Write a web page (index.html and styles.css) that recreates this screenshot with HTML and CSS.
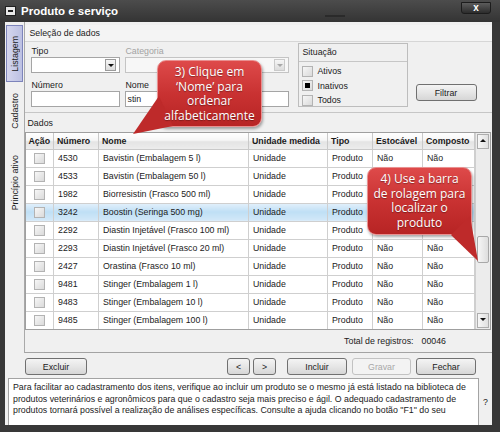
FILE: index.html
```html
<!DOCTYPE html>
<html lang="pt-BR">
<head>
    <meta charset="UTF-8">
    <meta name="viewport" content="width=device-width, initial-scale=1.0">
    <title>Produto e serviço</title>
    <link rel="stylesheet" href="styles.css">
</head>
<body>
    <div class="window">
        <div class="titlebar">
            <span class="sys-icon"></span>
            <span class="title">Produto e serviço</span>
            <span class="grip"></span>
            <span class="close">x</span>
        </div>

        <div class="frame">
            <div class="main">
                <div class="tabs">
                    <div class="tab active"><span>Listagem</span></div>
                    <div class="tab cadastro"><span>Cadastro</span></div>
                    <div class="tab principio"><span>Princípio ativo</span></div>
                </div>

                <div class="pane">
                    <!-- filtros -->
                    <div class="selection">
                        <div class="section-title">Seleção de dados</div>
                        <div class="filters">
                            <div class="fields">
                                <div class="field">
                                    <label>Tipo</label>
                                    <div class="combo"><span class="arrow"></span></div>
                                </div>
                                <div class="field disabled">
                                    <label>Categoria</label>
                                    <div class="combo"><span class="arrow"></span></div>
                                </div>
                                <div class="field second">
                                    <label>Número</label>
                                    <div class="input"></div>
                                </div>
                                <div class="field second">
                                    <label>Nome</label>
                                    <div class="input">stin</div>
                                </div>
                            </div>

                            <div class="situacao">
                                <div class="group-title">Situação</div>
                                <div class="checks">
                                    <div class="check"><span class="box"></span>Ativos</div>
                                    <div class="check"><span class="box checked"></span>Inativos</div>
                                    <div class="check"><span class="box"></span>Todos</div>
                                </div>
                            </div>

                            <button class="btn filtrar">Filtrar</button>
                        </div>
                    </div>

                    <!-- lista -->
                    <div class="data">
                        <div class="data-title">Dados</div>
                        <div class="grid">
                            <table>
                                <colgroup>
                                    <col class="c-acao">
                                    <col class="c-num">
                                    <col class="c-nome">
                                    <col class="c-un">
                                    <col class="c-tipo">
                                    <col class="c-est">
                                    <col class="c-comp">
                                </colgroup>
                                <thead>
                                    <tr>
                                        <th>Ação</th>
                                        <th>Número</th>
                                        <th>Nome</th>
                                        <th>Unidade medida</th>
                                        <th>Tipo</th>
                                        <th>Estocável</th>
                                        <th>Composto</th>
                                    </tr>
                                </thead>
                                <tbody>
                                    <tr><td class="acao"><span class="box"></span></td><td>4530</td><td>Bavistin (Embalagem 5 l)</td><td>Unidade</td><td>Produto</td><td>Não</td><td>Não</td></tr>
                                    <!-- linhas cobertas pelo balão 4 -->
                                    <tr><td class="acao"><span class="box"></span></td><td>4533</td><td>Bavistin (Embalagem 50 l)</td><td>Unidade</td><td>Produto</td><td></td><td></td></tr>
                                    <tr><td class="acao"><span class="box"></span></td><td>1982</td><td>Biorresistin (Frasco 500 ml)</td><td>Unidade</td><td>Produto</td><td></td><td></td></tr>
                                    <tr class="selected"><td class="acao"><span class="box"></span></td><td>3242</td><td>Boostin (Seringa 500 mg)</td><td>Unidade</td><td>Produto</td><td></td><td></td></tr>
                                    <tr><td class="acao"><span class="box"></span></td><td>2292</td><td>Diastin Injetável (Frasco 100 ml)</td><td>Unidade</td><td>Produto</td><td></td><td></td></tr>
                                    <tr><td class="acao"><span class="box"></span></td><td>2293</td><td>Diastin Injetável (Frasco 20 ml)</td><td>Unidade</td><td>Produto</td><td>Não</td><td>Não</td></tr>
                                    <tr><td class="acao"><span class="box"></span></td><td>2427</td><td>Orastina (Frasco 10 ml)</td><td>Unidade</td><td>Produto</td><td>Não</td><td>Não</td></tr>
                                    <tr><td class="acao"><span class="box"></span></td><td>9481</td><td>Stinger (Embalagem 1 l)</td><td>Unidade</td><td>Produto</td><td>Não</td><td>Não</td></tr>
                                    <tr><td class="acao"><span class="box"></span></td><td>9483</td><td>Stinger (Embalagem 10 l)</td><td>Unidade</td><td>Produto</td><td>Não</td><td>Não</td></tr>
                                    <tr><td class="acao"><span class="box"></span></td><td>9485</td><td>Stinger (Embalagem 100 l)</td><td>Unidade</td><td>Produto</td><td>Não</td><td>Não</td></tr>
                                </tbody>
                            </table>
                            <div class="scrollbar">
                                <span class="sb-btn up"></span>
                                <div class="track"><span class="thumb"></span></div>
                                <span class="sb-btn down"></span>
                            </div>
                        </div>
                        <div class="total">
                            <span>Total de registros:</span>
                            <span>00046</span>
                        </div>
                    </div>
                </div>
            </div>

            <div class="actions">
                <button class="btn excluir">Excluir</button>
                <button class="btn nav prev">&lt;</button>
                <button class="btn nav next">&gt;</button>
                <button class="btn incluir">Incluir</button>
                <button class="btn gravar" disabled>Gravar</button>
                <button class="btn fechar">Fechar</button>
            </div>

            <div class="help">
                <div class="help-text">Para facilitar ao cadastramento dos itens, verifique ao incluir um produto se o mesmo já está listado na biblioteca de produtos veterinários e agronômicos para que o cadastro seja mais preciso e ágil. O adequado cadastramento de produtos tornará possível a realização de análises específicas. Consulte a ajuda clicando no botão "F1" do seu</div>
                <div class="help-q">?</div>
            </div>
        </div>

        <!-- balões de dica -->
        <div class="callout tip-nome">3) Clique em<br>‘Nome’ para<br>ordenar<br>alfabeticamente</div>
        <div class="callout tip-scroll">4) Use a barra<br>de rolagem para<br>localizar o<br>produto</div>
    </div>
</body>
</html>
```

FILE: styles.css
```css
* {
    box-sizing: border-box;
}
body {
    margin: 0;
    font-family: "Liberation Sans", Arial, sans-serif;
    font-size: 8.8px;
    color: #1b1b1b;
}
button {
    font-family: inherit;
    font-size: inherit;
}

.window {
    position: relative;
    width: 500px;
    height: 432px;
    background: #383838;
    display: flex;
    flex-direction: column;
    overflow: hidden;
}

/* barra de título */
.titlebar {
    height: 22px;
    display: flex;
    align-items: center;
    padding: 0 9px 0 5px;
    background: linear-gradient(#4c4c4c, #343434);
}
.sys-icon {
    width: 11px;
    height: 10px;
    background: #e8e8e8;
    border: 1px solid #202020;
    position: relative;
}
.sys-icon::after {
    content: "";
    position: absolute;
    left: 2px;
    right: 2px;
    top: 3px;
    height: 2px;
    background: #202020;
}
.title {
    margin-left: 5px;
    color: #fff;
    font-weight: bold;
    font-size: 11.5px;
}
.grip {
    width: 20px;
    height: 2px;
    margin: 15px 0 0 207px;
    background: #2a2a2a;
    align-self: flex-start;
}
.close {
    margin-left: auto;
    align-self: flex-start;
    margin-top: 2px;
    width: 30px;
    height: 12px;
    background: linear-gradient(#5c5c5c, #2c2c2c);
    border: 1px solid #1c1c1c;
    border-radius: 0 0 3px 3px;
    color: #fff;
    font-weight: bold;
    font-size: 10px;
    line-height: 9px;
    text-align: center;
}

.frame {
    flex: 1;
    margin: 0 8px 7px 5px;
    background: #f0f0f0;
    display: flex;
    flex-direction: column;
}
.main {
    height: 331px;
    display: flex;
}

/* abas verticais */
.tabs {
    width: 20px;
    padding: 3px 0 0 1px;
    border-right: 1px solid #a9a9a9;
}
.tab {
    width: 17px;
    display: flex;
    align-items: center;
    justify-content: center;
    color: #1b1b1b;
}
.tab span {
    writing-mode: vertical-rl;
    transform: rotate(180deg);
    white-space: nowrap;
}
.tab.active {
    height: 57px;
    background: linear-gradient(90deg, #d4d6ee, #bcc0e2);
    border: 1px solid #7d84bb;
}
.tab.cadastro {
    height: 58px;
}
.tab.principio {
    height: 86px;
}

.pane {
    flex: 1;
    display: flex;
    flex-direction: column;
    padding-top: 3px;
}

/* seleção de dados */
.selection {
    height: 88px;
    border-bottom: 1px solid #c6c6c6;
}
.section-title {
    height: 17px;
    line-height: 17px;
    padding-left: 5px;
    border-bottom: 1px solid #d6d6d6;
    background: #f4f4f4;
}
.filters {
    display: flex;
    padding: 3px 6px 0;
}
.fields {
    display: grid;
    grid-template-columns: 89px 164px;
    column-gap: 5px;
}
.field label {
    display: block;
    height: 12px;
    line-height: 12px;
    padding-left: 1px;
}
.field.second label {
    margin-top: 6px;
}
.field.disabled label {
    color: #a3a3a3;
}
.combo, .input {
    height: 16px;
    background: #fff;
    border: 1px solid #a5a5a5;
}
.combo {
    display: flex;
    justify-content: flex-end;
    align-items: center;
    padding-right: 3px;
}
.input {
    line-height: 14px;
    padding-left: 2px;
}
.arrow {
    width: 11px;
    height: 12px;
    border: 1px solid #9a9a9a;
    background: linear-gradient(#f6f6f6, #dcdcdc);
    position: relative;
}
.arrow::after {
    content: "";
    position: absolute;
    left: 2px;
    top: 4px;
    border: 3px solid transparent;
    border-top: 3px solid #111;
    border-bottom: 0;
}
.field.disabled .combo {
    background: #f7f7f7;
    border-color: #c4c4c4;
}
.field.disabled .arrow {
    border-color: #cacaca;
}
.field.disabled .arrow::after {
    border-top-color: #a8a8a8;
}

.situacao {
    width: 110px;
    height: 64px;
    margin: -2px 0 0 9px;
    border: 1px solid #bdbdbd;
}
.group-title {
    height: 18px;
    line-height: 17px;
    padding-left: 4px;
    border-bottom: 1px solid #c6c6c6;
}
.checks {
    padding: 2px 0 0 3px;
}
.check {
    height: 14.5px;
    display: flex;
    align-items: center;
    gap: 5px;
}
.box {
    display: inline-block;
    width: 11px;
    height: 11px;
    border: 1px solid #b3b3b3;
    background: linear-gradient(135deg, #f7f7f7, #dadada);
    position: relative;
}
.box.checked::after {
    content: "";
    position: absolute;
    left: 2px;
    top: 2px;
    width: 5px;
    height: 5px;
    background: #000;
}

.btn {
    height: 17px;
    padding: 0;
    border: 1px solid #707070;
    border-radius: 3px;
    background: linear-gradient(#f4f4f4, #e6e6e6 50%, #d6d6d6);
    color: #1b1b1b;
}
.btn:disabled {
    border-color: #c2c2c2;
    background: #f3f3f3;
    color: #a8a8a8;
}
.filtrar {
    width: 61px;
    margin: 0 0 6px 8px;
    align-self: flex-end;
}

/* dados */
.data {
    flex: 1;
    display: flex;
    flex-direction: column;
    border-bottom: 1px solid #a3a3a3;
}
.data-title {
    height: 19px;
    line-height: 20px;
    padding-left: 3px;
}
.grid {
    display: flex;
    margin-right: 1px;
    border: 1px solid #9f9f9f;
    background: #fff;
}
table {
    width: 449px;
    border-collapse: collapse;
    table-layout: fixed;
}
.c-acao { width: 28px; }
.c-num { width: 45px; }
.c-nome { width: 150px; }
.c-un { width: 79px; }
.c-tipo { width: 45px; }
.c-est { width: 50px; }
.c-comp { width: 52px; }
th {
    height: 16px;
    padding: 0 3px;
    text-align: left;
    font-weight: bold;
    white-space: nowrap;
    overflow: hidden;
    border: 1px solid #c9c9c9;
    border-top: 0;
    background: linear-gradient(#ffffff, #f6f6f6 45%, #e4e4e4 55%, #ececec);
}
td {
    height: 18px;
    padding: 0 4px;
    white-space: nowrap;
    overflow: hidden;
    border: 1px solid #cfcfcf;
}
tr:last-child td {
    border-bottom: 0;
}
td:first-child, th:first-child {
    border-left: 0;
}
td.acao {
    text-align: center;
    padding: 0;
}
td.acao .box {
    vertical-align: middle;
}
tr.selected td {
    background: linear-gradient(#e2f0fb, #bfdff5 50%, #d2e8f8);
}

.scrollbar {
    width: 15px;
    display: flex;
    flex-direction: column;
    background: #ececec;
    border-left: 1px solid #cfcfcf;
}
.sb-btn {
    height: 15px;
    margin: 1px;
    border: 1px solid #adadad;
    background: linear-gradient(90deg, #f7f7f7, #e0e0e0);
    position: relative;
}
.sb-btn::after {
    content: "";
    position: absolute;
    left: 2px;
    top: 4px;
    border: 3px solid transparent;
}
.sb-btn.up::after {
    border-bottom: 3px solid #111;
    border-top: 0;
}
.sb-btn.down::after {
    border-top: 3px solid #111;
    border-bottom: 0;
}
.track {
    flex: 1;
}
.thumb {
    display: block;
    height: 27px;
    margin: 86px 1px 0;
    border: 1px solid #a8a8a8;
    border-radius: 2px;
    background: linear-gradient(90deg, #f6f6f6, #dedede);
}

.total {
    flex: 1;
    display: flex;
    align-items: center;
    justify-content: flex-end;
    gap: 8px;
    padding-right: 46px;
}

/* botões de ação */
.actions {
    height: 25px;
    display: flex;
    align-items: flex-start;
    padding: 5px 16px 0 20px;
}
.excluir {
    width: 62px;
    margin-right: auto;
}
.nav {
    width: 23px;
}
.next {
    margin-left: 3px;
}
.incluir {
    width: 60px;
    margin-left: 11px;
}
.gravar {
    width: 59px;
    margin-left: 5px;
}
.fechar {
    width: 60px;
    margin-left: 5px;
}

/* texto de ajuda */
.help {
    flex: 1;
    display: flex;
}
.help-text {
    flex: 1;
    margin-left: 3px;
    padding: 3px 4px;
    background: #fff;
    border: 1px solid #a3a3a3;
    border-bottom: 0;
    line-height: 11.5px;
    overflow: hidden;
}
.help-q {
    width: 13px;
    display: flex;
    align-items: center;
    justify-content: center;
}

/* balões */
.callout {
    position: absolute;
    z-index: 1;
    padding-top: 4px;
    border-radius: 9px;
    border: 1px solid #e99090;
    background: linear-gradient(#de4a4a, #c93232 50%, #b72424);
    box-shadow: 1px 2px 3px rgba(0, 0, 0, 0.35);
    color: #fff;
    text-align: center;
    white-space: nowrap;
    font-family: "Open Sans", "Liberation Sans", sans-serif;
    font-size: 12px;
    line-height: 14.5px;
    text-shadow: 0 1px 1px rgba(0, 0, 0, 0.35);
}
.callout::after {
    content: "";
    position: absolute;
    z-index: -1;
    background: #be2a2a;
}
.tip-nome {
    left: 157px;
    top: 60px;
    width: 105px;
    height: 67px;
}
.tip-nome::after {
    left: -26px;
    top: 34px;
    width: 42px;
    height: 40px;
    clip-path: polygon(27px 1px, 41px 31px, 1px 39px);
}
.tip-scroll {
    left: 367px;
    top: 167px;
    width: 105px;
    height: 68px;
}
.tip-scroll::after {
    left: 82px;
    top: 47px;
    width: 30px;
    height: 48px;
    clip-path: polygon(1px 20px, 20px 1px, 28px 46px);
}
```
